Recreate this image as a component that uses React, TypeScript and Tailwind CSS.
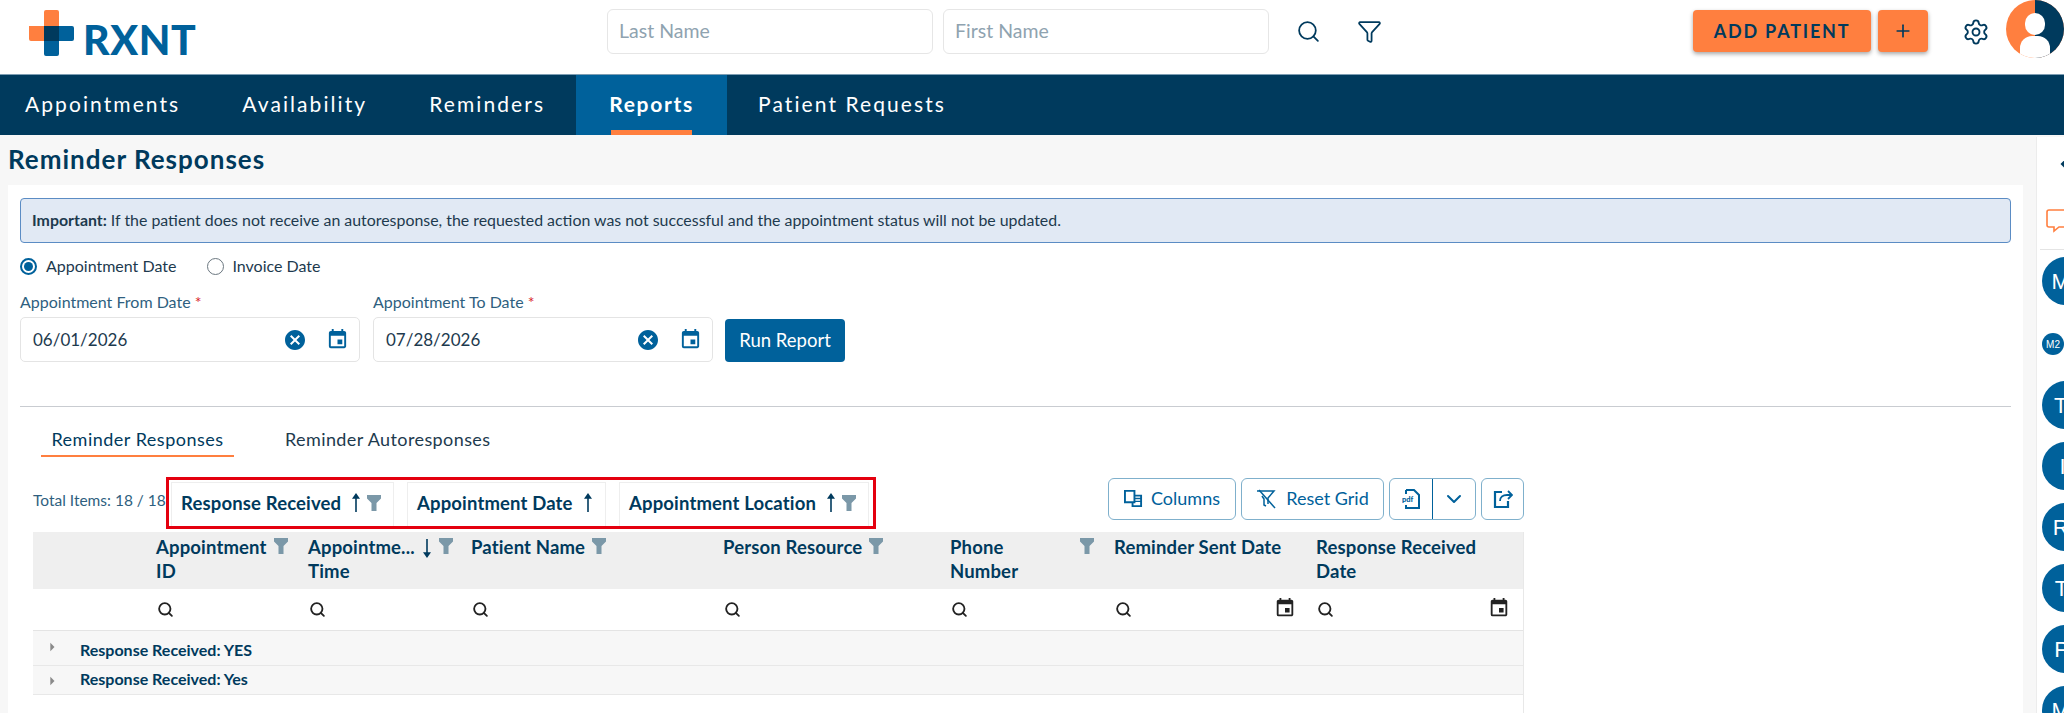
import { ChevronDown, Funnel, Plus, Search, Settings } from 'lucide-react';
import { MdArrowLeft, MdArrowRight, MdCancel, MdEvent } from 'react-icons/md';

const navItems = ['Appointments', 'Availability', 'Reminders', 'Reports', 'Patient Requests'];

const groupChips = [
  { label: 'Response Received', filter: true, width: 'w-[223px]' },
  { label: 'Appointment Date', filter: false, width: 'w-[199px]' },
  { label: 'Appointment Location', filter: true, width: 'w-[250px]' },
];

const columns = [
  { label: 'Appointment ID', filter: true, sort: false, labelClass: 'w-[113px]' },
  { label: 'Appointme... Time', filter: true, sort: true, labelClass: 'w-[112px]' },
  { label: 'Patient Name', filter: true, sort: false, labelClass: 'mr-[2px]' },
  { label: 'Person Resource', filter: true, sort: false, labelClass: 'mr-[2px]' },
  { label: 'Phone Number', filter: true, sort: false, labelClass: 'w-[70px] mr-[55px]' },
  { label: 'Reminder Sent Date', filter: false, sort: false, labelClass: 'flex-1' },
  { label: 'Response Received Date', filter: false, sort: false, labelClass: 'flex-1' },
];

const avatars = ['MA', 'M2', 'TE', 'IJ', 'RA', 'TA', 'PA', 'MA'];

const FilledFunnel = () => (
  <svg viewBox="0 0 14 16" className="w-[14px] h-[16px] shrink-0 text-[#7b98a8]" fill="currentColor">
    <path d="M0 0h14v3.5L9.5 8v8h-5V8L0 3.5z" />
  </svg>
);

const SortArrow = ({ down }: { down?: boolean }) => (
  <svg viewBox="0 0 8 20" className={`w-[8px] h-[20px] shrink-0 text-[#003a5d] ${down ? 'rotate-180' : ''}`} fill="none" stroke="currentColor" strokeWidth="1.6">
    <path d="M4 2v17" />
    <path d="M1.5 5L4 1.5 6.5 5z" fill="currentColor" />
  </svg>
);

const Logo = () => (
  <div className="flex items-center gap-[9px] ml-[29px] mt-[5px]">
    <svg viewBox="0 0 45 46" className="w-[45px] h-[46px]">
      <path d="M15 2a2 2 0 0 1 2-2h11a2 2 0 0 1 2 2v29H2a2 2 0 0 1-2-2V16h15z" fill="#ff7f3f" />
      <path d="M15 16h28a2 2 0 0 1 2 2v11a2 2 0 0 1-2 2H30v13a2 2 0 0 1-2 2H17a2 2 0 0 1-2-2z" fill="#00619b" />
      <path d="M15 16h15v15H15z" fill="#003a5d" />
    </svg>
    <span className="font-black text-[41px] leading-none text-[#00619b] tracking-[0.6px] mt-[14px]">RXNT</span>
  </div>
);

const Avatar = () => (
  <div className="w-[58px] h-[58px] rounded-full overflow-hidden relative shrink-0 bg-[#ff7f3f]">
    <div className="absolute right-0 top-0 w-1/2 h-full bg-[#003a5d]" />
    <div className="absolute left-[19px] top-[13px] w-[20px] h-[22px] rounded-full bg-white" />
    <div className="absolute left-[14px] top-[36px] w-[30px] h-[24px] rounded-t-[12px] bg-white" />
  </div>
);

const DateField = ({ label, value }: { label: string; value: string }) => (
  <div className="w-[340px]">
    <div className="text-[16px] leading-[20px] text-[#2f5f80] mb-[5px]">
      {label} <span className="text-[#d9262c]">*</span>
    </div>
    <div className="h-[45px] bg-white border border-[#e4e4e4] rounded-[5px] flex items-center pl-3 pr-[10px]">
      <span className="text-[17px] text-[#1d3a4e] flex-1">{value}</span>
      <MdCancel className="text-[#00619b] w-[24px] h-[24px] mr-[19px]" />
      <MdEvent className="text-[#00619b] w-[23px] h-[23px]" />
    </div>
  </div>
);

const OutlineButton = ({ children, className }: { children: React.ReactNode; className: string }) => (
  <div className={`h-[42px] border border-[#7fb0cc] rounded-[6px] flex items-center justify-center text-[#00619b] text-[18px] ${className}`}>
    {children}
  </div>
);

const App = () => {
  return (
    <div className="w-[2064px] h-[713px] overflow-hidden flex flex-col bg-[#f7f7f7] font-['Lato',sans-serif]">
      <header className="h-[75px] bg-white border-b border-[#7d9db3] flex shrink-0">
        <div className="w-[607px]">
          <Logo />
        </div>
        <div className="flex items-start pt-[9px] gap-[10px]">
          <div className="w-[326px] h-[45px] border border-[#e6e6e6] rounded-[6px] flex items-center px-[11px] pb-[2px] text-[19.5px] text-[#8fa3b0]">Last Name</div>
          <div className="w-[326px] h-[45px] border border-[#e6e6e6] rounded-[6px] flex items-center px-[11px] pb-[2px] text-[19.5px] text-[#8fa3b0]">First Name</div>
        </div>
        <div className="flex items-start pt-[19px] ml-[27px]">
          <Search className="w-[25px] h-[25px] text-[#003a5d]" strokeWidth={1.7} />
          <Funnel className="w-[25px] h-[25px] text-[#003a5d] ml-[36px]" strokeWidth={1.7} />
        </div>
        <div className="flex-1 flex items-start justify-end">
          <button className="mt-[10px] w-[178px] h-[42px] rounded-[4px] bg-[#ff7f3f] shadow-[0_2px_4px_rgba(0,0,0,0.35)] text-[#003a5d] font-bold text-[18px] tracking-[1.8px]">ADD PATIENT</button>
          <button className="mt-[10px] ml-[7px] w-[50px] h-[42px] rounded-[4px] bg-[#ff7f3f] shadow-[0_2px_4px_rgba(0,0,0,0.35)] flex items-center justify-center">
            <Plus className="w-[20px] h-[20px] text-[#003a5d]" strokeWidth={2} />
          </button>
          <Settings className="w-[28px] h-[28px] text-[#003a5d] mt-[18px] ml-[34px] mr-[16px]" strokeWidth={1.6} />
          <Avatar />
        </div>
      </header>

      <nav className="h-[60px] bg-[#003a5d] flex shrink-0">
        {navItems.map((item) =>
          item === 'Reports' ? (
            <div key={item} className="relative h-full w-[151px] bg-[#00619b] flex items-center justify-center text-white font-bold text-[21px] tracking-[1.7px] pb-[2px]">
              {item}
              <div className="absolute bottom-0 left-[35px] w-[81px] h-[5px] bg-[#ff7f3f]" />
            </div>
          ) : (
            <div key={item} className="h-full flex items-center px-[31px] first:pl-[25px] text-white text-[21px] tracking-[2.08px] pb-[2px]">
              {item}
            </div>
          )
        )}
      </nav>

      <div className="flex-1 flex min-h-0">
        <main className="w-[2036px] pl-2 pr-[13px] shrink-0">
          <h1 className="h-[50px] flex items-center pb-[2px] text-[#003a5d] font-bold text-[26px] tracking-[1px]">Reminder Responses</h1>
          <div className="bg-white h-full px-3 pt-[13px]">
            <div className="h-[45px] bg-[#e1e9f4] border border-[#5b8cc4] rounded-[4px] flex items-center px-[11px] pb-[2px] text-[15.9px] text-[#1d3a4e]">
              <b className="mr-1">Important:</b> If the patient does not receive an autoresponse, the requested action was not successful and the appointment status will not be updated.
            </div>

            <div className="flex items-center mt-[13px] h-[20px] text-[16px] text-[#1d3a4e]">
              <span className="w-[17px] h-[17px] rounded-full border-2 border-[#00619b] flex items-center justify-center mr-[9px]">
                <span className="w-[9px] h-[9px] rounded-full bg-[#00619b]" />
              </span>
              Appointment Date
              <span className="w-[17px] h-[17px] rounded-full border border-[#6b7780] ml-[31px] mr-[8px]" />
              Invoice Date
            </div>

            <div className="flex items-end mt-[16px]">
              <DateField label="Appointment From Date" value="06/01/2026" />
              <div className="w-[13px]" />
              <DateField label="Appointment To Date" value="07/28/2026" />
              <button className="w-[120px] h-[43px] ml-[12px] rounded-[4px] bg-[#00619b] text-white text-[18.5px]">Run Report</button>
            </div>

            <div className="h-px bg-[#c9ccd1] mt-[44px]" />

            <div className="flex mt-[20px] ml-[21px]">
              <div className="w-[193px] h-[30px] border-b-2 border-[#ff7f3f] text-center text-[#003a5d] text-[18px] tracking-[0.5px] leading-[24px]">Reminder Responses</div>
              <div className="ml-[51px] text-[#1d3a4e] text-[18px] tracking-[0.4px] leading-[24px]">Reminder Autoresponses</div>
            </div>

            <div className="w-[1504px] ml-[13px]">
              <div className="flex items-center h-[55px] mt-[18px]">
                <span className="w-[133px] text-[15.5px] text-[#2f5f80] shrink-0 -mt-[4px] whitespace-nowrap">Total Items: 18 / 18</span>
                <div className="w-[710px] h-[52px] border-[3px] border-[#e4000f] flex gap-[13px] items-end pl-[2px] shrink-0 overflow-hidden">
                  {groupChips.map((chip) => (
                    <div key={chip.label} className={`${chip.width} h-[44px] border border-b-0 border-[#eeeeee] flex items-center pl-[9px] text-[#003a5d] font-bold text-[18.5px] tracking-[0.15px]`}>
                      {chip.label}
                      <span className="ml-[11px] -mt-[2px]"><SortArrow /></span>
                      {chip.filter && <span className="ml-[7px] -mt-[3px]"><FilledFunnel /></span>}
                    </div>
                  ))}
                </div>
                <div className="flex items-center gap-[5px] ml-[232px] -mt-[8px]">
                  <OutlineButton className="w-[128px] gap-2">
                    <svg viewBox="0 0 20 20" className="w-[19px] h-[19px]" fill="none" stroke="currentColor" strokeWidth="2">
                      <path d="M1 2h10v12H1z" />
                      <path d="M11 7h7v11h-9v-4" />
                      <path d="M11 10h7M11 13h7" strokeWidth="1.5" />
                    </svg>
                    Columns
                  </OutlineButton>
                  <OutlineButton className="w-[143px] gap-2">
                    <svg viewBox="0 0 22 20" className="w-[22px] h-[20px]" fill="none" stroke="currentColor" strokeWidth="1.5">
                      <path d="M1 2h17l-6 7v6M6 7l2 3v6l2 1" />
                      <path d="M3 1l16 18" />
                    </svg>
                    Reset Grid
                  </OutlineButton>
                  <OutlineButton className="w-[87px]">
                    <div className="w-[43px] h-full flex items-center justify-center border-r border-[#00619b]">
                      <svg viewBox="0 0 18 20" className="w-[18px] h-[20px]">
                        <path d="M4 1h8l5 5v13H4v-3M4 5V1" fill="none" stroke="currentColor" strokeWidth="2" />
                        <text x="0" y="13" fontSize="7.5" fontWeight="900" fill="currentColor" fontFamily="Lato, sans-serif">pdf</text>
                      </svg>
                    </div>
                    <div className="w-[43px] flex items-center justify-center">
                      <ChevronDown className="w-[24px] h-[24px]" strokeWidth={2} />
                    </div>
                  </OutlineButton>
                  <OutlineButton className="w-[43px]">
                    <svg viewBox="0 0 20 20" className="w-[20px] h-[20px]" fill="none" stroke="currentColor" strokeWidth="2.2">
                      <path d="M9 3H2v15h13v-6" />
                      <path d="M7 12c0-4 3-6 7-6h5M15 2l4 4-4 4" strokeWidth="1.8" />
                    </svg>
                  </OutlineButton>
                </div>
              </div>

              <div className="w-[1491px] mt-[2px] border-r border-[#e8e8e8] h-[200px]">
                <div className="grid grid-cols-[115px_152px_163px_252px_227px_164px_202px_214px] h-[57px] bg-[#efefef]">
                  <div />
                  {columns.map((col) => (
                    <div key={col.label} className="flex items-start pl-2 pr-[6px] pt-[3px] text-[#003a5d] font-bold text-[18.5px] tracking-[0.15px] leading-[24px]">
                      <span className={col.labelClass}>{col.label}</span>
                      {col.sort && <span className="mt-[3px] mx-[3px]"><SortArrow down /></span>}
                      {col.filter && <span className="ml-[5px] mt-[3px]"><FilledFunnel /></span>}
                    </div>
                  ))}
                </div>
                <div className="grid grid-cols-[115px_152px_163px_252px_227px_164px_202px_214px] h-[42px] bg-white border-b border-[#e4e4e4]">
                  <div />
                  {columns.map((col) => (
                    <div key={col.label} className="flex items-center pl-[9px] pr-3 justify-between">
                      <Search className="w-[17px] h-[17px] text-[#222222]" strokeWidth={2.6} />
                      {col.label.includes('Date') && <MdEvent className="w-[22px] h-[22px] text-[#222222] -mt-[3px]" />}
                    </div>
                  ))}
                </div>
                <div className="h-[35px] bg-[#f7f7f7] border-b border-[#e8e8e8] flex items-center pl-[9px] pt-[3px] text-[#003a5d] font-bold text-[16px]">
                  <MdArrowRight className="w-[20px] h-[20px] text-[#8a8a8a] mr-[18px] -mt-[6px]" />
                  Response Received: YES
                </div>
                <div className="h-[29px] bg-[#f7f7f7] border-b border-[#e8e8e8] flex items-center pl-[9px] pb-[2px] text-[#003a5d] font-bold text-[16px]">
                  <MdArrowRight className="w-[20px] h-[20px] text-[#8a8a8a] mr-[18px] mt-[4px]" />
                  Response Received: Yes
                </div>
              </div>
            </div>
          </div>
        </main>

        <aside className="flex-1 bg-white border-l border-[#ececec] mt-[2px] overflow-hidden">
          <div className="h-[54px] flex items-center pl-[16px]">
            <MdArrowLeft className="w-[20px] h-[20px] text-[#003a5d] shrink-0" />
          </div>
          <div className="h-[59px] border-b border-[#e4e4e4] ml-[3px] flex items-start pt-[18px] pl-[6px]">
            <svg viewBox="0 0 26 24" className="w-[26px] h-[24px] shrink-0" fill="none" stroke="#ff7f3f" strokeWidth="1.6">
              <path d="M3 1h20a2 2 0 0 1 2 2v13a2 2 0 0 1-2 2H13l-5 4v-4H3a2 2 0 0 1-2-2V3a2 2 0 0 1 2-2z" />
            </svg>
          </div>
          <div className="flex flex-col items-start pl-[5px] pt-[7px] gap-[13px] w-[80px]">
            {avatars.map((name, i) =>
              name === 'M2' ? (
                <div key={i} className="w-[22px] h-[22px] mt-[15px] mb-[13px] rounded-full bg-[#00619b] text-white text-[10px] font-['Liberation_Sans',sans-serif] flex items-center justify-center shrink-0">
                  {name}
                </div>
              ) : (
                <div key={i} className="w-[48px] h-[48px] pl-[4px] rounded-full bg-[#00619b] text-white text-[22px] font-['Liberation_Sans',sans-serif] flex items-center justify-center shrink-0">
                  {name}
                </div>
              )
            )}
          </div>
        </aside>
      </div>
    </div>
  );
};

export default App;
